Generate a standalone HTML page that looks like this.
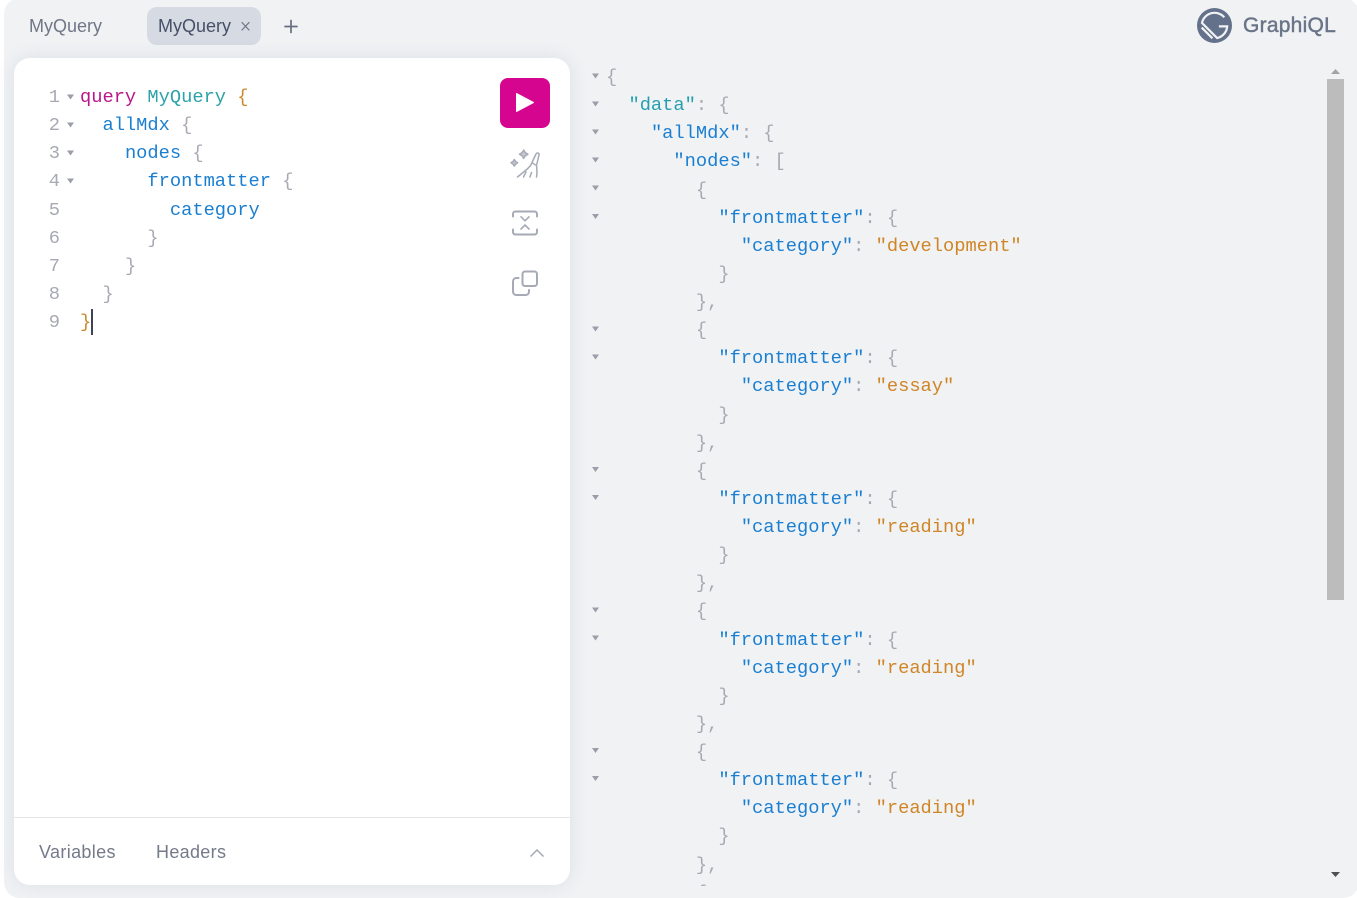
<!DOCTYPE html>
<html>
<head>
<meta charset="utf-8">
<style>
html,body{margin:0;padding:0;background:#fff;width:1357px;height:896px;overflow:hidden}
*{box-sizing:border-box}
#main{position:absolute;left:4px;top:-2px;width:1355px;height:900px;background:#f0f2f4;border-radius:16px}
.t{position:absolute;font-family:"Liberation Sans",sans-serif;white-space:nowrap}
pre{position:absolute;margin:0;font-family:"Liberation Mono",monospace;font-size:18.73px;line-height:28.13px;white-space:pre}
#card{position:absolute;left:14px;top:58px;width:556px;height:827px;background:#fff;border-radius:16px;box-shadow:0 0 20px rgba(59,75,104,.10)}
.k{color:#b9168a}.d{color:#2ba3a8}.f{color:#1b7fd1}.p{color:#a7aab3}.o{color:#c98a2a}
.s{color:#d08526}.a{color:#1b7fd1}.dk{color:#259fb0}
svg{position:absolute;overflow:visible}
</style>
</head>
<body>
<div id="main"></div>
<div class="t" style="left:29px;top:15px;font-size:18px;line-height:22px;color:#6f7685">MyQuery</div>
<div style="position:absolute;left:147px;top:7px;width:114px;height:38px;background:#d6dae2;border-radius:10px"></div>
<div class="t" style="left:158px;top:15px;font-size:18px;line-height:22px;color:#475068">MyQuery</div>
<svg style="left:0;top:0" width="300" height="50" fill="none" stroke-linecap="round">
<path d="M242 22.500l7 7.500M249 22.500l-7 7.500" stroke="#6d7485" stroke-width="1.200"/>
<path d="M291 20.500v12M285 26.500h12" stroke="#666e80" stroke-width="1.700"/>
</svg>
<svg style="left:1197px;top:8px" width="35" height="35" viewBox="0 0 24 24" fill="none">
<circle cx="12" cy="12" r="12" fill="#64718a"/>
<path d="M18.700 6.400A8.800 8.800 0 0 0 3.400 10.200L13.800 20.600A8.800 8.800 0 0 0 20.700 12.600H15" stroke="#f0f2f4" stroke-width="1.500"/>
<path d="M3.200 13.400L10.600 20.800" stroke="#f0f2f4" stroke-width="1.500"/>
</svg>
<div class="t" style="left:1243px;top:13px;font-size:21px;line-height:25px;color:#6a7488;-webkit-text-stroke:.45px #6a7488;letter-spacing:.25px">GraphiQL</div>

<div id="card"></div>
<pre style="left:42px;top:83px;width:18px;text-align:right;color:#a7aab3">1
2
3
4
5
6
7
8
9</pre>
<pre style="left:80px;top:83px"><span class="k">query</span> <span class="d">MyQuery</span> <span class="o">{</span>
  <span class="f">allMdx</span> <span class="p">{</span>
    <span class="f">nodes</span> <span class="p">{</span>
      <span class="f">frontmatter</span> <span class="p">{</span>
        <span class="f">category</span>
      <span class="p">}</span>
    <span class="p">}</span>
  <span class="p">}</span>
<span class="o">}</span></pre>
<div style="position:absolute;left:91px;top:309px;width:2px;height:26px;background:#3d4352"></div>
<svg style="left:0;top:0" width="90" height="200" fill="#9a9ea9">
<path d="M67 94.500h7l-3.500 5zM67 122.500h7l-3.500 5zM67 150.500h7l-3.500 5zM67 178.500h7l-3.500 5z"/>
</svg>

<div style="position:absolute;left:500px;top:78px;width:50px;height:50px;background:#d60590;border-radius:8px"></div>
<svg style="left:0;top:0" width="560" height="310" fill="none" stroke="#a6aab5" stroke-width="2" stroke-linecap="round" stroke-linejoin="round">
<path d="M516.500 93.500v18l17-9z" fill="#fff" stroke="#fff" stroke-width="1"/>
<path d="M523.700 150l1.600 2.600 2.600 1.600-2.600 1.600-1.600 2.600-1.600-2.600-2.600-1.600 2.600-1.600zM514.300 159.500l1.300 2 2 1.300-2 1.300-1.300 2-1.300-2-2-1.300 2-1.300z" stroke-width="1.500" fill="#c4c7cf"/>
<path d="M532 162.500l4-8.500c1-1.800 3.500-1 3 1l-2.500 10.500c.5 4 .7 8 0 11.500M532 162.500c0 0 2 1.800 4.500 3M532 162.500c-1.500 5-8 9-14.500 14.500M523.500 177l2.500-5M530 177l1.500-4.500" stroke-width="1.500"/>
<path d="M513 216.500v-2.500c0-1.500 1-2.500 2.500-2.500h19c1.500 0 2.500 1 2.500 2.500v2.500M513 229.500v2.500c0 1.500 1 2.500 2.500 2.500h19c1.500 0 2.500-1 2.500-2.500v-2.500"/>
<path d="M521 216.800l4 4 4-4M521 229l4-4 4 4" stroke-width="1.600"/>
<rect x="522.500" y="271.500" width="14.500" height="14.500" rx="2.500"/>
<path d="M518.500 278h-2c-2 0-3.500 1.500-3.500 3.500v10c0 2 1.500 3.500 3.500 3.500h9c2 0 3.500-1.500 3.500-3.500v-1.500"/>
</svg>

<div style="position:absolute;left:14px;top:817px;width:556px;height:1px;background:#e3e5e9"></div>
<div class="t" style="left:39px;top:841px;font-size:18px;line-height:22px;color:#737a89;letter-spacing:.35px">Variables</div>
<div class="t" style="left:156px;top:841px;font-size:18px;line-height:22px;color:#737a89;letter-spacing:.32px">Headers</div>
<svg style="left:0;top:0" width="560" height="870" fill="none">
<path d="M530.500 856.500l6.500-6.500 6.500 6.500" stroke="#a4a8b2" stroke-width="1.500"/>
</svg>

<div style="position:absolute;left:1323px;top:62px;width:25px;height:824px;background:#f1f2f3"></div>
<div style="position:absolute;left:1327px;top:79px;width:17px;height:521px;background:#bcbcbc"></div>
<svg style="left:0;top:0" width="1357" height="896">
<path d="M1331 74l4.500-5 4.500 5z" fill="#a3a3a3"/>
<path d="M1331 872h9l-4.500 5z" fill="#505050"/>
</svg>

<svg style="left:0;top:0" width="610" height="800" fill="#9a9ea9">
<path d="M592 73.500h7l-3.500 5zM592 101.500h7l-3.500 5zM592 129.500h7l-3.500 5zM592 157.500h7l-3.500 5zM592 185.500h7l-3.500 5zM592 214h7l-3.500 5zM592 326.500h7l-3.500 5zM592 354.500h7l-3.500 5zM592 467h7l-3.500 5zM592 495h7l-3.500 5zM592 607.500h7l-3.500 5zM592 635.500h7l-3.500 5zM592 748h7l-3.500 5zM592 776h7l-3.500 5z"/>
</svg>
<div style="position:absolute;left:600px;top:60px;width:700px;height:826px;overflow:hidden">
<pre style="left:6px;top:3px"><span class="p">{</span>
  <span class="dk">"data"</span><span class="p">: {</span>
    <span class="a">"allMdx"</span><span class="p">: {</span>
      <span class="a">"nodes"</span><span class="p">: [</span>
        <span class="p">{</span>
          <span class="a">"frontmatter"</span><span class="p">: {</span>
            <span class="a">"category"</span><span class="p">:</span> <span class="s">"development"</span>
          <span class="p">}</span>
        <span class="p">},</span>
        <span class="p">{</span>
          <span class="a">"frontmatter"</span><span class="p">: {</span>
            <span class="a">"category"</span><span class="p">:</span> <span class="s">"essay"</span>
          <span class="p">}</span>
        <span class="p">},</span>
        <span class="p">{</span>
          <span class="a">"frontmatter"</span><span class="p">: {</span>
            <span class="a">"category"</span><span class="p">:</span> <span class="s">"reading"</span>
          <span class="p">}</span>
        <span class="p">},</span>
        <span class="p">{</span>
          <span class="a">"frontmatter"</span><span class="p">: {</span>
            <span class="a">"category"</span><span class="p">:</span> <span class="s">"reading"</span>
          <span class="p">}</span>
        <span class="p">},</span>
        <span class="p">{</span>
          <span class="a">"frontmatter"</span><span class="p">: {</span>
            <span class="a">"category"</span><span class="p">:</span> <span class="s">"reading"</span>
          <span class="p">}</span>
        <span class="p">},</span>
        <span class="p">{</span></pre>
</div>
</body>
</html>
